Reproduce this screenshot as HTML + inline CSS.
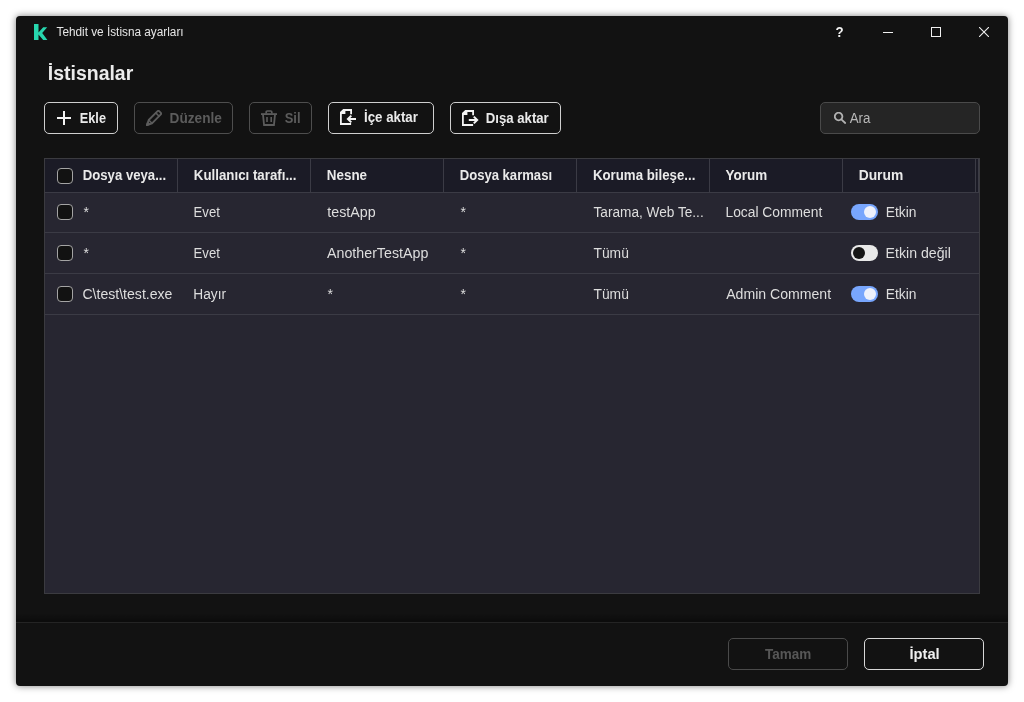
<!DOCTYPE html>
<html lang="tr">
<head>
<meta charset="utf-8">
<title>Tehdit ve İstisna ayarları</title>
<style>
*{box-sizing:border-box;margin:0;padding:0}
html,body{width:1024px;height:702px;background:#fff;overflow:hidden}
body{font-family:"Liberation Sans",sans-serif;font-size:14px;color:#e6e6e6;position:relative}
.win{will-change:transform;position:absolute;left:16px;top:16px;width:992px;height:670px;background:#121212;border-radius:4px;box-shadow:0 0 7px rgba(0,0,0,.5)}
.win div,.win span,.win svg,.win h1,.win i{position:absolute}
.t{white-space:nowrap;transform-origin:0 0;font-style:normal}
.titlebar{left:0;top:0;width:992px;height:32px}
.title{font-size:12px;line-height:16px;color:#e6e6e6}
.q{font-weight:bold;font-size:14px;line-height:16px;color:#f0f0f0}
h1.t{font-size:20px;line-height:26px;font-weight:bold;color:#ebebeb}
.toolbar{left:28px;top:86px;width:936px;height:32px}
.btn{top:0;height:32px;border:1px solid #cfcfcf;border-radius:5px}
.btn.dis{border-color:#4e4e4e}
.bt{font-weight:bold;color:#ebebeb;font-size:14px;line-height:30px}
.dis .bt{color:#5c5c5c}
.search{left:776px;top:0;width:160px;height:32px;border:1px solid #4a4a4a;border-radius:5px;background:#252525}
.ara{line-height:30px;color:#b8b8b8}
.tbl{left:28px;top:142px;width:936px;height:436px;background:#272631;border:1px solid #3b3b40}
.row{left:0;width:934px;border-bottom:1px solid #3b3b45}
.row.head{top:0;height:34px;background:#1b1b26}
.vl{top:0;width:1px;height:34px;background:#3b3b45}
.th{line-height:33px;font-weight:bold;color:#eaeaea}
.td{line-height:40px;color:#dedede}
.cb{left:12px;width:16px;height:16px;border:1px solid #a4a4a4;border-radius:4px;background:#121212}
.tg{left:806px;width:27px;height:16px;border-radius:8px}
.tg i{top:2px;width:12px;height:12px;border-radius:6px}
.tg.on{background:#78a6fd}.tg.on i{left:13px;background:#eef1fb}
.tg.off{background:#e9e9e9}.tg.off i{left:2px;background:#151515}
.footer{left:0;top:597px;width:992px;height:73px}
.sepsh{left:0;top:0;width:992px;height:9px;background:linear-gradient(to bottom,rgba(0,0,0,0),rgba(0,0,0,.38))}
.sep{left:0;top:9px;width:992px;height:1px;background:#242424}
.fbtn{top:25px;width:120px;height:32px;border:1px solid #d8d8d8;border-radius:5px}
.fbtn.dis{border-color:#4a4a4a}
.fb{line-height:30px;font-weight:bold;color:#efefef}
.dis .fb{color:#575757}
</style>
</head>
<body>
<div class="win">
  <div class="titlebar">
    <svg style="left:18px;top:8px" width="14" height="16" viewBox="0 0 14 16"><path d="M0 0H4.5V8.6L9.2 3.2H13.2L8.2 9.1L13.4 16H9.2L4.5 10.6V16H0z" fill="#27d6ae"/></svg>
    <span class="t title" style="left:40px;top:8px;transform:translateX(0.48px) scaleX(0.9825)">Tehdit ve İstisna ayarları</span>
    <span class="t q" style="left:819px;top:8px;transform:translateX(0.46px) scaleX(0.9487)">?</span>
    <svg style="left:867px;top:10px" width="10" height="12"><rect x="0" y="6" width="10" height="1" fill="#f0f0f0"/></svg>
    <svg style="left:915px;top:11px" width="10" height="10"><rect x=".5" y=".5" width="9" height="9" fill="none" stroke="#f0f0f0"/></svg>
    <svg style="left:963px;top:11px" width="10" height="10"><path d="M0 0L10 10M10 0L0 10" stroke="#f0f0f0" stroke-width="1.1"/></svg>
  </div>
  <h1 class="t " style="left:31px;top:44px;transform:translateX(0.78px) scaleX(0.9734)">İstisnalar</h1>
  <div class="toolbar">
    <div class="btn" style="left:0px;width:74px"><svg style="left:12px;top:8px" width="14" height="14"><path d="M7 0v14M0 7h14" stroke="#f4f4f4" stroke-width="2"/></svg><span class="t bt" style="left:34px;top:0px;transform:translateX(0.85px) scaleX(0.9064)">Ekle</span></div>
    <div class="btn dis" style="left:90px;width:99px"><svg style="left:11px;top:7px" width="16" height="16" viewBox="0 0 16 16" fill="none" stroke="#5c5c5c" stroke-width="1.85" stroke-linejoin="round" stroke-linecap="round"><path d="M11.3 1.4a1.5 1.5 0 0 1 2.1 0l1.2 1.2a1.5 1.5 0 0 1 0 2.1L6 13.3L1 15L2.7 10Z"/><path d="M2.7 10L6 13.3M9.8 2.9L13.1 6.2" stroke-width="1.5"/><path d="M.9 15.1L1.8 12.6L3.4 14.2Z" fill="#5c5c5c"/></svg><span class="t bt" style="left:34px;top:0px;transform:translateX(0.61px) scaleX(0.9730)">Düzenle</span></div>
    <div class="btn dis" style="left:205px;width:63px"><svg style="left:11px;top:7px" width="16" height="16" viewBox="0 0 16 16" fill="none" stroke="#5c5c5c" stroke-width="1.8"><path d="M5.2 3.4V2a1 1 0 0 1 1-1h3.6a1 1 0 0 1 1 1v1.4" stroke-width="1.7"/><rect x="0" y="3.2" width="16" height="1.8" fill="#5c5c5c" stroke="none"/><path d="M2 4.6L3.05 15H12.95L14 4.6"/><rect x="5.2" y="7" width="1.6" height="5" fill="#5c5c5c" stroke="none"/><rect x="9.4" y="7" width="1.6" height="5" fill="#5c5c5c" stroke="none"/></svg><span class="t bt" style="left:34px;top:0px;transform:translateX(0.66px) scaleX(0.9236)">Sil</span></div>
    <div class="btn" style="left:284px;width:106px"><svg style="left:11px;top:6px" width="17" height="16" viewBox="0 0 17 16"><path d="M3.2 0H12V5.3H10.2V1.9H5.4V5H1.8V14H11.1V16H0V2.9Z" fill="#f4f4f4"/><path d="M11.3 6.6L7.9 10L11.3 13.4M8.2 10H16" fill="none" stroke="#f4f4f4" stroke-width="2"/></svg><span class="t bt" style="left:35px;top:-1px;transform:translateX(0.01px) scaleX(0.9482)">İçe aktar</span></div>
    <div class="btn" style="left:406px;width:111px"><svg style="left:11px;top:7px" width="17" height="16" viewBox="0 0 17 16"><path d="M3.2 0H12V5.3H10.2V1.9H5.4V5H1.8V14H11.1V16H0V2.9Z" fill="#f4f4f4"/><path d="M11.8 6.6L15.2 10L11.8 13.4M6.8 10H14.9" fill="none" stroke="#f4f4f4" stroke-width="2"/></svg><span class="t bt" style="left:34px;top:0px;transform:translateX(0.69px) scaleX(0.9422)">Dışa aktar</span></div>
    <div class="search"><svg style="left:13px;top:9px" width="14" height="14" viewBox="0 0 14 14" fill="none" stroke="#b2b2b2" stroke-width="1.8" stroke-linecap="round"><circle cx="4.6" cy="4.5" r="3.8"/><path d="M7.6 7.6L11.2 11"/></svg><span class="t ara" style="left:28px;top:0px;transform:translateX(0.70px) scaleX(0.9529)">Ara</span></div>
  </div>
  <div class="tbl">
    <div class="row head">
      <div class="cb" style="top:9px"></div>
      <span class="t th" style="left:37px;top:0px;transform:translateX(0.75px) scaleX(0.9398)">Dosya veya...</span>
      <span class="t th" style="left:148px;top:0px;transform:translateX(0.83px) scaleX(0.9492)">Kullanıcı tarafı...</span>
      <span class="t th" style="left:281px;top:0px;transform:translateX(0.86px) scaleX(0.9561)">Nesne</span>
      <span class="t th" style="left:414px;top:0px;transform:translateX(0.70px) scaleX(0.9344)">Dosya karması</span>
      <span class="t th" style="left:547px;top:0px;transform:translateX(0.93px) scaleX(0.9471)">Koruma bileşe...</span>
      <span class="t th" style="left:680px;top:0px;transform:translateX(0.60px) scaleX(0.9602)">Yorum</span>
      <span class="t th" style="left:813px;top:0px;transform:translateX(0.65px) scaleX(0.9872)">Durum</span>
      <div class="vl" style="left:132px"></div>
      <div class="vl" style="left:265px"></div>
      <div class="vl" style="left:398px"></div>
      <div class="vl" style="left:531px"></div>
      <div class="vl" style="left:664px"></div>
      <div class="vl" style="left:797px"></div>
      <div class="vl" style="left:930px"></div>
      <div class="vl" style="left:933px"></div>
    </div>
    <div class="row" style="top:34px;height:40px">
      <div class="cb" style="top:11px"></div>
      <span class="t td" style="left:38px;top:-1px;transform:translateX(0.55px) scaleX(1.0000)">*</span>
      <span class="t td" style="left:148px;top:-1px;transform:translateX(0.55px) scaleX(0.9396)">Evet</span>
      <span class="t td" style="left:282px;top:-1px;transform:translateX(0.28px) scaleX(1.0183)">testApp</span>
      <span class="t td" style="left:415px;top:-1px;transform:translateX(0.55px) scaleX(1.0000)">*</span>
      <span class="t td" style="left:548px;top:-1px;transform:translateX(0.49px) scaleX(0.9746)">Tarama, Web Te...</span>
      <span class="t td" style="left:680px;top:-1px;transform:translateX(0.48px) scaleX(0.9874)">Local Comment</span>
      <span class="t td" style="left:840px;top:-1px;transform:translateX(0.69px) scaleX(0.9873)">Etkin</span>
      <div class="tg on" style="top:11px"><i></i></div>
    </div>
    <div class="row" style="top:74px;height:41px">
      <div class="cb" style="top:12px"></div>
      <span class="t td" style="left:38px;top:0px;transform:translateX(0.55px) scaleX(1.0000)">*</span>
      <span class="t td" style="left:148px;top:0px;transform:translateX(0.55px) scaleX(0.9396)">Evet</span>
      <span class="t td" style="left:282px;top:0px;transform:translateX(0.02px) scaleX(1.0167)">AnotherTestApp</span>
      <span class="t td" style="left:415px;top:0px;transform:translateX(0.55px) scaleX(1.0000)">*</span>
      <span class="t td" style="left:548px;top:0px;transform:translateX(0.45px) scaleX(0.9895)">Tümü</span>
      <span class="t td" style="left:840px;top:0px;transform:translateX(0.56px) scaleX(1.0111)">Etkin değil</span>
      <div class="tg off" style="top:12px"><i></i></div>
    </div>
    <div class="row" style="top:115px;height:41px">
      <div class="cb" style="top:12px"></div>
      <span class="t td" style="left:37px;top:0px;transform:translateX(0.45px) scaleX(1.0054)">C\test\test.exe</span>
      <span class="t td" style="left:148px;top:0px;transform:translateX(0.23px) scaleX(0.9804)">Hayır</span>
      <span class="t td" style="left:282px;top:0px;transform:translateX(0.50px) scaleX(1.0000)">*</span>
      <span class="t td" style="left:415px;top:0px;transform:translateX(0.55px) scaleX(1.0000)">*</span>
      <span class="t td" style="left:548px;top:0px;transform:translateX(0.45px) scaleX(0.9895)">Tümü</span>
      <span class="t td" style="left:681px;top:0px;transform:translateX(0.18px) scaleX(1.0064)">Admin Comment</span>
      <span class="t td" style="left:840px;top:0px;transform:translateX(0.69px) scaleX(0.9873)">Etkin</span>
      <div class="tg on" style="top:12px"><i></i></div>
    </div>
  </div>
  <div class="footer">
    <div class="sepsh"></div><div class="sep"></div>
    <div class="fbtn dis" style="left:712px"><span class="t fb" style="left:35px;top:0px;transform:translateX(0.94px) scaleX(0.9642)">Tamam</span></div>
    <div class="fbtn" style="left:848px"><span class="t fb" style="left:44px;top:0px;transform:translateX(0.43px) scaleX(1.0512)">İptal</span></div>
  </div>
</div>
</body>
</html>
